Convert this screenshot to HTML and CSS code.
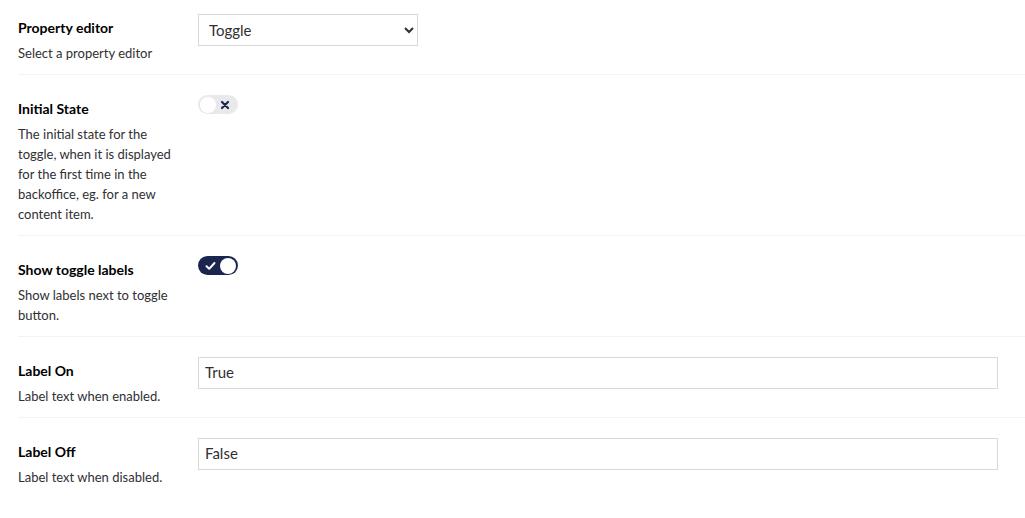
FILE: index.html
```html
<!DOCTYPE html>
<html lang="en">
<head>
    <meta charset="UTF-8">
    <meta name="viewport" content="width=device-width, initial-scale=1.0">
    <title>Toggle settings</title>
    <link rel="stylesheet" href="styles.css">
</head>
<body>
    <div class="editor">
        <div class="prop-row">
            <div class="prop-label">
                <div class="prop-title">Property editor</div>
                <div class="prop-desc">Select a property editor</div>
            </div>
            <div class="prop-control">
                <select class="select">
                    <option>Toggle</option>
                </select>
            </div>
        </div>

        <div class="prop-row">
            <div class="prop-label">
                <div class="prop-title">Initial State</div>
                <div class="prop-desc">The initial state for the toggle, when it is displayed for the first time in the backoffice, eg. for a new content item.</div>
            </div>
            <div class="prop-control">
                <button class="toggle">
                    <span class="toggle-knob"></span>
                    <svg class="toggle-icon" width="10" height="10" viewBox="0 0 10 10">
                        <path d="M2 2 L8 8 M8 2 L2 8" stroke="#1b264f" stroke-width="2.2" stroke-linecap="round"/>
                    </svg>
                </button>
            </div>
        </div>

        <div class="prop-row">
            <div class="prop-label">
                <div class="prop-title">Show toggle labels</div>
                <div class="prop-desc">Show labels next to toggle button.</div>
            </div>
            <div class="prop-control">
                <button class="toggle checked">
                    <svg class="toggle-icon" width="11" height="10" viewBox="0 0 11 10">
                        <path d="M1.5 5.2 L4.2 7.8 L9.5 2" stroke="#fff" stroke-width="2" fill="none" stroke-linecap="round" stroke-linejoin="round"/>
                    </svg>
                    <span class="toggle-knob"></span>
                </button>
            </div>
        </div>

        <div class="prop-row">
            <div class="prop-label">
                <div class="prop-title">Label On</div>
                <div class="prop-desc">Label text when enabled.</div>
            </div>
            <div class="prop-control">
                <input class="text-input" type="text" value="True">
            </div>
        </div>

        <div class="prop-row">
            <div class="prop-label">
                <div class="prop-title">Label Off</div>
                <div class="prop-desc">Label text when disabled.</div>
            </div>
            <div class="prop-control">
                <input class="text-input" type="text" value="False">
            </div>
        </div>
    </div>
</body>
</html>
```

FILE: styles.css
```css
:root {
    --navy: #1b264f;
    --border: #d8d7d9;
    --divider: #f3f3f5;
    --text: #303033;
}

body {
    margin: 0;
    font-family: Lato, "Open Sans", sans-serif;
    background: #fff;
    color: var(--text);
}

.editor {
    padding-left: 18px;
}

.prop-row {
    display: flex;
    padding: 20px 0 11px;
    border-bottom: 1px solid var(--divider);
}

.prop-row:first-child {
    padding-top: 14px;
}

.prop-row:last-child {
    border-bottom: none;
}

.prop-label {
    width: 160px;
    flex-shrink: 0;
    padding-right: 20px;
    padding-top: 4px;
}

.prop-title {
    font-size: 14px;
    font-weight: bold;
    line-height: 20px;
    color: #000;
}

.prop-desc {
    margin-top: 5px;
    font-size: 13px;
    line-height: 20px;
}

.prop-control {
    flex: 1;
}

.select {
    width: 220px;
    height: 32px;
    padding: 0 6px 1px 6px;
    border: 1px solid var(--border);
    background: #fff;
    font-family: inherit;
    font-size: 15px;
    color: var(--text);
    border-radius: 0;
}

.text-input {
    box-sizing: border-box;
    width: 800px;
    height: 32px;
    padding: 0 6px 3px;
    border: 1px solid var(--border);
    font-family: inherit;
    font-size: 15px;
    color: var(--text);
    outline: none;
}

.toggle {
    display: flex;
    align-items: center;
    justify-content: space-between;
    box-sizing: border-box;
    width: 40px;
    height: 19px;
    padding: 0 2px;
    border: none;
    border-radius: 10px;
    background: #e9e9eb;
    cursor: pointer;
}

.toggle-knob {
    width: 16px;
    height: 16px;
    border-radius: 50%;
    background: #fff;
}

.toggle-icon {
    margin-right: 6px;
}

.toggle.checked {
    background: var(--navy);
}

.toggle.checked .toggle-icon {
    margin-right: 0;
    margin-left: 5px;
}
```
